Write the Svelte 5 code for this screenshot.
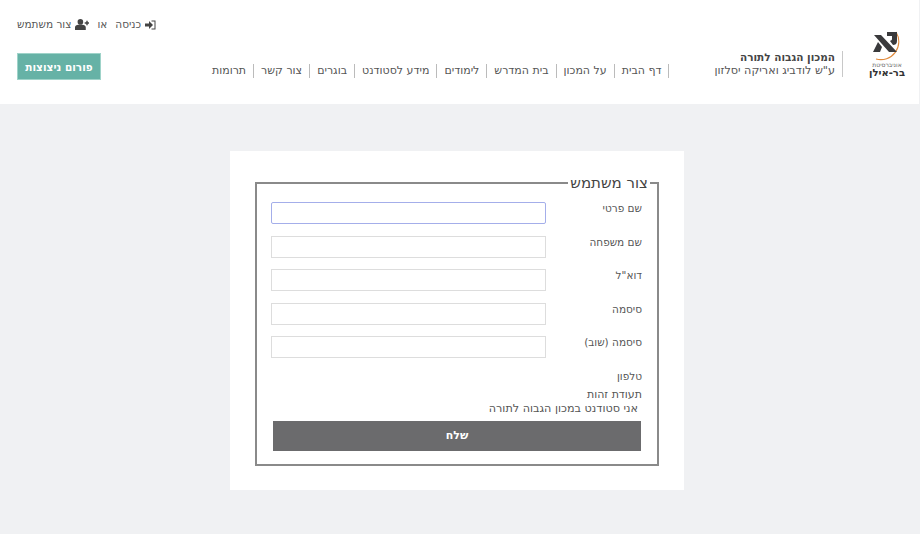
<script>
  const nav = ["דף הבית", "על המכון", "בית המדרש", "לימודים", "מידע לסטודנט", "בוגרים", "צור קשר", "תרומות"];
  const fields = ["שם פרטי", "שם משפחה", 'דוא"ל', "סיסמה", "סיסמה (שוב)"];
</script>

<div class="page" dir="rtl">
  <header class="top">
    <div class="brand">
      <div class="logo">
        <svg width="36" height="31" viewBox="0 0 36 31">
          <path d="M27 2 A18 18 0 0 1 7 29" fill="none" stroke="#e08a3c" stroke-width="1.1" />
          <path d="M5 5 H12 L28 22 H20 Z M18 2 H28 V11 C28 14 26 15 24 15 L21 11 C22 10.5 23 10 23 9 V6 H18 Z M4 22 L9 12 L13 17 L11 22 Z" fill="#3a3a3c" />
        </svg>
        <span class="uni">אוניברסיטת</span>
        <span class="bar-ilan">בר-אילן</span>
      </div>
      <div class="title">
        <strong>המכון הגבוה לתורה</strong>
        <span class="sub">ע"ש לודביג ואריקה יסלזון</span>
      </div>
    </div>
    <nav class="menu">
      {#each nav as item}
        <a href="#top">{item}</a>
      {/each}
    </nav>
    <div class="side">
      <div class="account">
        <svg width="11" height="10" viewBox="0 0 11 10"><path d="M0 3.5 H4 V1 L8 5 L4 9 V6.5 H0 Z M6.5 .5 H10.5 V9.5 H6.5 V8.5 H9.5 V1.5 H6.5 Z" fill="#444" /></svg>
        <a href="#top">כניסה</a>
        <span class="or">או</span>
        <svg width="14" height="11" viewBox="0 0 13 10"><circle cx="5" cy="2.6" r="2.6" fill="#444" /><path d="M0 10 V7.5 C0 6 1.5 5.2 3 5.2 H7 C8.5 5.2 10 6 10 7.5 V10 Z M9 3 H10.5 V1.5 H11.8 V3 H13 V4.3 H11.8 V5.8 H10.5 V4.3 H9 Z" fill="#444" /></svg>
        <a href="#top">צור משתמש</a>
      </div>
      <button class="forum">פורום ניצוצות</button>
    </div>
  </header>

  <main class="content">
    <div class="card">
      <fieldset>
        <legend>צור משתמש</legend>
        {#each fields as label, i}
          <div class="row">
            <label for={"f" + i}>{label}</label>
            <input id={"f" + i} class:focused={i === 0} type="text" />
          </div>
        {/each}
        <div class="plain phone">טלפון</div>
        <div class="plain id">תעודת זהות</div>
        <div class="student">אני סטודנט במכון הגבוה לתורה</div>
        <button class="send">שלח</button>
      </fieldset>
    </div>
  </main>
</div>

<style>
  :global(body) {
    margin: 0;
    background: #f0f1f3;
  }

  .page {
    font-family: "DejaVu Sans", "Liberation Sans", sans-serif;
    font-size: 10.5px;
    color: #555;
    height: 534px;
    overflow: hidden;
  }

  a {
    color: inherit;
    text-decoration: none;
  }

  .top {
    background: #fff;
    height: 104px;
    display: flex;
    box-sizing: border-box;
    padding: 0 15px 0 17px;
    margin-right: 1px;
  }

  .brand {
    display: flex;
    align-items: flex-start;
    padding-top: 30px;
  }

  .logo {
    width: 34px;
    display: flex;
    flex-direction: column;
    align-items: center;
    color: #333;
  }

  .uni {
    font-size: 6px;
    line-height: 7px;
    color: #666;
    white-space: nowrap;
  }

  .bar-ilan {
    font-size: 10px;
    font-weight: bold;
    line-height: 10px;
    white-space: nowrap;
  }

  .title {
    margin-top: 21px;
    margin-right: 27px;
    border-right: 1px solid #c8c8c8;
    padding-right: 7px;
    height: 26px;
    display: flex;
    flex-direction: column;
    line-height: 13px;
    white-space: nowrap;
  }

  .title strong {
    color: #444;
  }

  .sub {
    font-size: 11.2px;
  }

  .menu {
    display: flex;
    align-items: center;
    height: 14px;
    margin: 64px 45px 0 0;
    flex: 1;
    font-size: 11px;
  }

  .menu a {
    border-right: 1px solid #bbb;
    padding: 0 7px;
    white-space: nowrap;
    line-height: 14px;
  }

  .side {
    display: flex;
    flex-direction: column;
    align-items: flex-end;
    padding-top: 18px;
  }

  .account {
    display: flex;
    align-items: center;
    gap: 4px;
    height: 13px;
    line-height: 13px;
    white-space: nowrap;
  }

  .or {
    margin: 0 4px;
  }

  .forum {
    margin-top: 22px;
    width: 84px;
    height: 27px;
    border: 1px solid #9fd3c9;
    background: #66b2a6;
    color: #fff;
    font: bold 10.5px "DejaVu Sans", sans-serif;
    padding: 0;
  }

  .content {
    display: flex;
    justify-content: center;
    padding: 47px 6px 0 0;
  }

  .card {
    width: 454px;
    height: 339px;
    box-sizing: border-box;
    background: #fff;
    padding: 23px 25px 24px 25px;
  }

  fieldset {
    margin: 0;
    border: 2px solid #8a8a8a;
    padding: 0 15px 0 14px;
    height: 292px;
    box-sizing: border-box;
    min-width: 0;
  }

  legend {
    font-size: 15px;
    line-height: 18px;
    color: #444;
    padding: 0 2px;
    margin-right: -8px;
  }

  .row {
    display: flex;
    height: 22px;
    margin-bottom: 11.5px;
    justify-content: space-between;
  }

  .row:first-of-type {
    margin-top: 10px;
  }

  label {
    line-height: 14px;
    margin-top: -1px;
  }

  input {
    width: 275px;
    height: 22px;
    box-sizing: border-box;
    border: 1px solid #ddd;
    background: #fff;
    margin: 0;
    padding: 0;
  }

  input.focused {
    border: 1.5px solid #a4aeea;
    border-radius: 2px;
  }

  .plain {
    line-height: 14px;
  }

  .phone {
    margin-top: -1px;
  }

  .id {
    margin-top: 5px;
    font-size: 11px;
  }

  .student {
    line-height: 14px;
    margin-right: 4px;
    font-size: 11.2px;
  }

  .send {
    display: block;
    width: 368px;
    height: 30px;
    margin: 5px 1px 0 0;
    border: 0;
    background: #6b6b6d;
    color: #fff;
    font: bold 11px "DejaVu Sans", sans-serif;
    padding: 0;
  }
</style>
